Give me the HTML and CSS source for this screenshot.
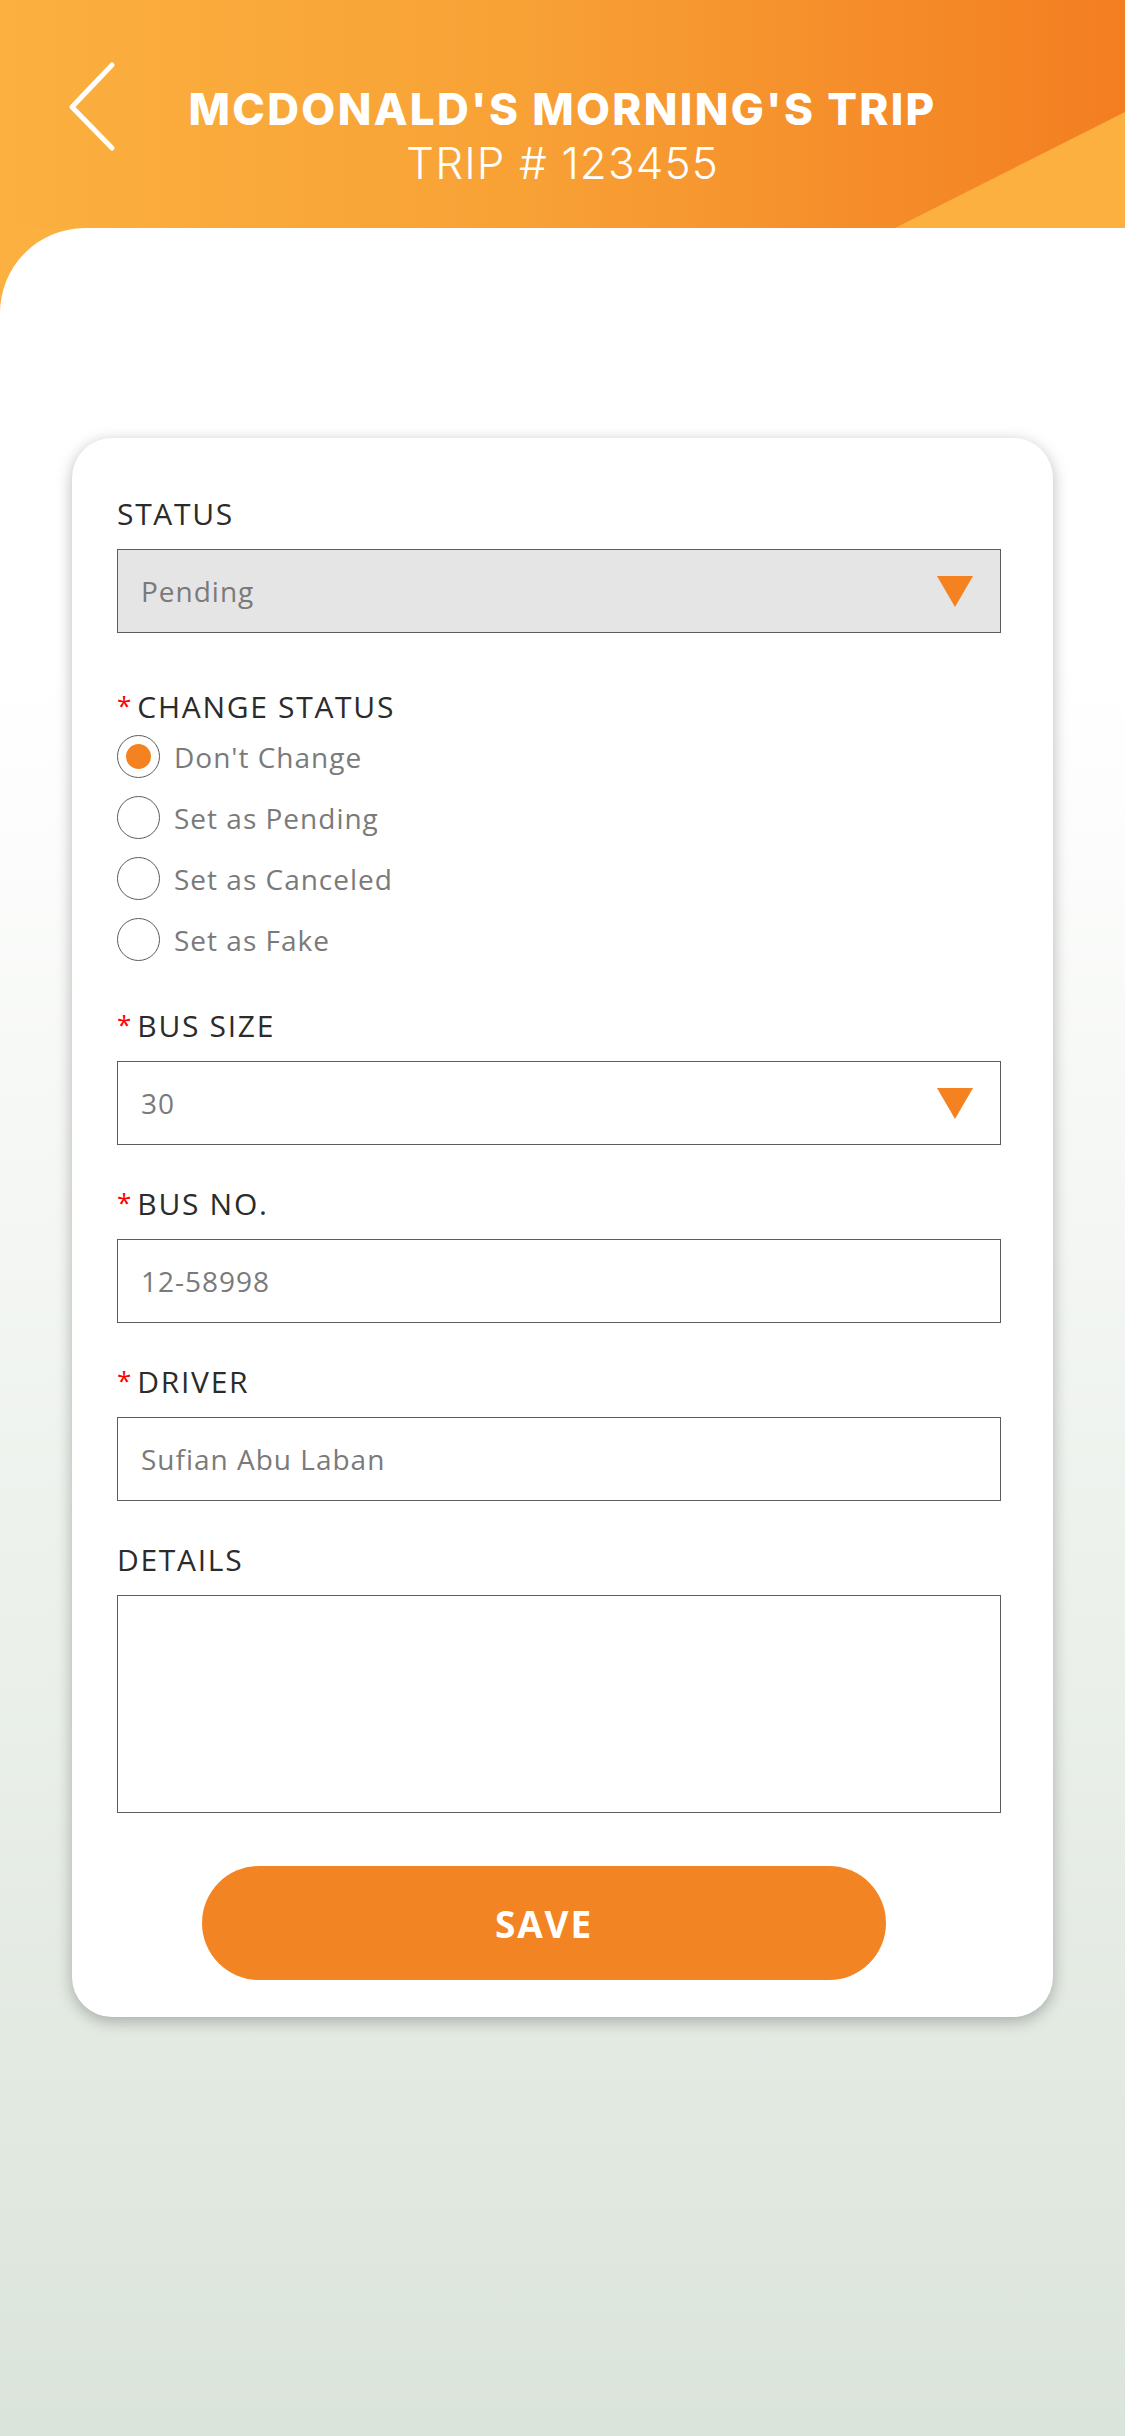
FILE: index.html
```html
<!DOCTYPE html>
<html lang="en">
<head>
    <meta charset="UTF-8">
    <meta name="viewport" content="width=device-width, initial-scale=1.0">
    <title>McDonald's Morning's Trip</title>
    <link rel="stylesheet" href="styles.css">
</head>
<body>
    <div class="screen">
        <header class="hero">
            <a class="back" href="#">
                <svg width="60" height="100" viewBox="0 0 60 100">
                    <polyline points="52,5 12,47 52,88" fill="none" stroke="#fff" stroke-width="5" stroke-linecap="round" stroke-linejoin="round"/>
                </svg>
            </a>
            <div class="hero-title">
                <h1>MCDONALD'S MORNING'S TRIP</h1>
                <p>TRIP # 123455</p>
            </div>
        </header>

        <main class="sheet">
            <form class="card" onsubmit="return false">
                <div class="field field-status">
                    <div class="label">STATUS</div>
                    <div class="box box-disabled">
                        <span>Pending</span>
                        <i class="caret"></i>
                    </div>
                </div>

                <div class="field field-radios">
                    <div class="label label-tight"><span class="req">*</span>CHANGE STATUS</div>
                    <div class="radios">
                        <label class="radio"><span class="circle checked"></span>Don't Change</label>
                        <label class="radio"><span class="circle"></span>Set as Pending</label>
                        <label class="radio"><span class="circle"></span>Set as Canceled</label>
                        <label class="radio"><span class="circle"></span>Set as Fake</label>
                    </div>
                </div>

                <div class="field">
                    <div class="label"><span class="req">*</span>BUS SIZE</div>
                    <div class="box">
                        <span>30</span>
                        <i class="caret"></i>
                    </div>
                </div>

                <div class="field">
                    <div class="label"><span class="req">*</span>BUS NO.</div>
                    <div class="box"><span>12-58998</span></div>
                </div>

                <div class="field">
                    <div class="label"><span class="req">*</span>DRIVER</div>
                    <div class="box"><span>Sufian Abu Laban</span></div>
                </div>

                <div class="field field-last">
                    <div class="label">DETAILS</div>
                    <div class="box box-area"></div>
                </div>

                <button class="save" type="submit">SAVE</button>
            </form>
        </main>
    </div>
</body>
</html>
```

FILE: styles.css
```css
* { box-sizing: border-box; }
body { margin: 0; font-family: "Open Sans", "Liberation Sans", sans-serif; color: #2b2b2b; }

.screen { width: 1125px; min-height: 2436px; background: #fbb03f; display: flex; flex-direction: column; }

.hero { position: relative; height: 228px; padding-top: 60px; display: grid; grid-template-columns: 1fr auto 1fr; align-items: start; background: linear-gradient(90deg, #fbb03f 0%, #f8a236 45%, #f37e21 100%); overflow: hidden; }
.hero::after { content: ""; position: absolute; right: 0; bottom: 0; width: 230px; height: 116px; background: #fbb03f; clip-path: polygon(100% 0, 100% 100%, 0 100%); }
.back { display: block; padding-left: 60px; }
.back svg { display: block; }
.hero-title { margin-top: 23px; text-align: center; color: #fff; font-family: Inter, "Open Sans", sans-serif; }
.hero-title h1 { margin: 0; font-size: 44px; line-height: 52px; font-weight: 800; letter-spacing: 2.3px; }
.hero-title p { margin: 2px 0 0; font-size: 44px; line-height: 52px; font-weight: 300; letter-spacing: 1.1px; }

.sheet { flex: 1; background: linear-gradient(180deg, #fff 0%, #fff 20%, #dbe4da 100%); border-top-left-radius: 85px; padding-bottom: 40px; }

.card { width: 981px; margin: 210px 0 0 72px; padding: 61px 52px 37px 45px; background: #fff; border-radius: 40px; box-shadow: 0 4px 16px rgba(0, 0, 0, 0.28); }

.field { margin-bottom: 44px; }
.field-status { margin-bottom: 59px; }
.field-radios { margin-bottom: 50px; }
.field-last { margin-bottom: 53px; }

.label { font-size: 30px; line-height: 30px; letter-spacing: 1.7px; color: #2b2b2b; margin-bottom: 20px; display: flex; align-items: flex-start; }
.label-tight { margin-bottom: 13px; }
.req { color: #f00; font-size: 26px; line-height: 26px; margin-right: 6px; letter-spacing: 0; }

.box { height: 84px; border: 1px solid #5c5c5c; background: #fff; display: flex; align-items: center; justify-content: space-between; padding: 0 27px 0 23px; font-size: 28px; color: #7a7a7a; letter-spacing: 1px; }
.box-disabled { background: #e5e5e5; }
.box-area { height: 218px; }
.caret { width: 0; height: 0; border-left: 18px solid transparent; border-right: 18px solid transparent; border-top: 31px solid #f58220; }

.radios { display: flex; flex-direction: column; gap: 18px; }
.radio { display: flex; align-items: center; gap: 14px; height: 43px; font-size: 28px; color: #7a7a7a; letter-spacing: 1px; }
.circle { width: 43px; height: 43px; border: 1px solid #5c5c5c; border-radius: 50%; display: flex; align-items: center; justify-content: center; flex: none; }
.circle.checked::after { content: ""; width: 25px; height: 25px; border-radius: 50%; background: #f58220; }

.save { display: block; width: 684px; height: 114px; margin-left: 85px; border: none; border-radius: 57px; background: #f38423; color: #fff; font-family: inherit; font-size: 37px; font-weight: 700; letter-spacing: 1.8px; cursor: pointer; }
```
